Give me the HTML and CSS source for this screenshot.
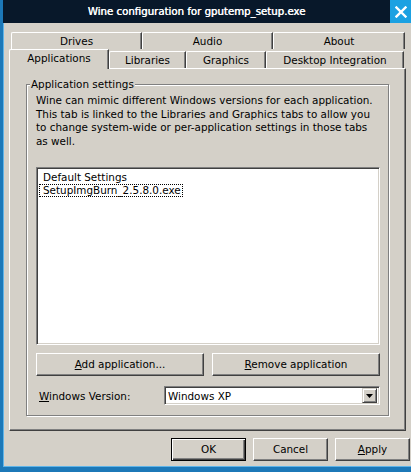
FILE: index.html
```html
<!DOCTYPE html>
<html>
<head>
<meta charset="utf-8">
<link rel="stylesheet" href="styles.css">
</head>
<body>
<div class="window">
  <div class="titlebar">
    <div class="title">Wine configuration for gputemp_setup.exe</div>
    <div class="close">
      <svg width="12" height="12" viewBox="0 0 12 12"><path d="M1.5 1.5 L10.5 10.5 M10.5 1.5 L1.5 10.5" stroke="#fff" stroke-width="2.4" stroke-linecap="square"/></svg>
    </div>
  </div>
  <div class="client">
    <div class="tabs">
      <div class="tabrow back">
        <div class="tab w-drives">Drives</div>
        <div class="tab w-audio">Audio</div>
        <div class="tab w-about">About</div>
      </div>
      <div class="tabrow front">
        <div class="tab sel w-apps">Applications</div>
        <div class="tab w-libs">Libraries</div>
        <div class="tab w-gfx">Graphics</div>
        <div class="tab w-desk">Desktop Integration</div>
      </div>
    </div>
    <div class="pane">
      <div class="group">
        <div class="legend">Application settings</div>
        <p class="desc">Wine can mimic different Windows versions for each application. This tab is linked to the Libraries and Graphics tabs to allow you to change system-wide or per-application settings in those tabs as well.</p>
        <div class="listbox">
          <div class="item">Default Settings</div>
          <div class="item focus">SetupImgBurn_2.5.8.0.exe</div>
        </div>
        <div class="btnrow">
          <div class="btn wide"><u>A</u>dd application...</div>
          <div class="btn wide"><u>R</u>emove application</div>
        </div>
        <div class="verrow">
          <div class="verlabel"><u>W</u>indows Version:</div>
          <div class="combo">
            <div class="combotext">Windows XP</div>
            <div class="dropbtn"><svg width="7" height="4" viewBox="0 0 7 4"><path d="M0 0 H7 L3.5 4 Z" fill="#000"/></svg></div>
          </div>
        </div>
      </div>
    </div>
    <div class="footer">
      <div class="btn small default">OK</div>
      <div class="btn small">Cancel</div>
      <div class="btn small"><u>A</u>pply</div>
    </div>
  </div>
</div>
</body>
</html>
```

FILE: styles.css
```css
html, body {
  margin: 0;
  padding: 0;
  background: #d4d0c8;
  overflow: hidden;
}
body {
  font-family: "DejaVu Sans", sans-serif;
  font-size: 10.4px;
  color: #000;
}
.window {
  width: 411px;
  height: 472px;
  box-sizing: border-box;
  border-left: 3px solid #1c78b8;
  border-bottom: 5px solid #1c78b8;
  box-shadow: inset 1px 0 0 #5fb4e8, inset 0 -1px 0 #5fb4e8;
  display: flex;
  flex-direction: column;
  background: #d4d0c8;
}
.titlebar {
  height: 23px;
  background: #08182a;
  display: flex;
  align-items: center;
  position: relative;
}
.title {
  flex: 1;
  text-align: center;
  color: #fff;
  font-size: 10.2px;
  font-weight: normal;
  text-shadow: 0.4px 0 0 #fff;
  padding-left: 0;
}
.close {
  width: 21px;
  height: 23px;
  background: #1ba1e2;
  display: flex;
  align-items: center;
  justify-content: center;
}
.client {
  flex: 1;
  display: flex;
  flex-direction: column;
  padding: 9px 0 0 6px;
}
.tabs {
  display: flex;
  flex-direction: column;
}
.tabrow {
  display: flex;
}
.tabrow.back {
  margin-left: 2px;
  height: 17px;
}
.tabrow.front {
  height: 19px;
}
.tab {
  box-sizing: border-box;
  border-top: 1px solid #fff;
  border-left: 1px solid #fff;
  border-right: 1px solid #404040;
  box-shadow: inset -1px 0 0 #808080;
  border-top-left-radius: 2px;
  text-align: center;
  line-height: 16px;
  height: 17px;
}
.tabrow.front .tab {
  margin-top: 2px;
  height: 17px;
}
.tabrow.front .tab.sel {
  margin-top: 0;
  height: 20px;
  line-height: 17px;
  position: relative;
  z-index: 2;
  background: #d4d0c8;
}
.w-drives { width: 131px; }
.w-audio { width: 131px; }
.w-about { width: 132px; }
.w-apps { width: 100px; }
.w-libs { width: 77px; }
.w-gfx { width: 80px; }
.w-desk { width: 138px; }
.pane {
  width: 397px;
  height: 363px;
  box-sizing: border-box;
  border-top: 1px solid #fff;
  border-left: 1px solid #fff;
  border-right: 1px solid #404040;
  border-bottom: 1px solid #404040;
  box-shadow: inset -1px -1px 0 #808080;
  padding: 15px 16px 14px 16px;
  display: flex;
}
.group {
  flex: 1;
  position: relative;
  border: 1px solid #808080;
  box-shadow: 1px 1px 0 #fff, inset 1px 1px 0 #fff;
  padding: 0 8px 0 9px;
  display: flex;
  flex-direction: column;
}
.legend {
  position: absolute;
  top: -7px;
  left: 3px;
  padding: 0 1px;
  background: #d4d0c8;
  line-height: 13px;
}
.desc {
  margin: 9px 0 0 0;
  line-height: 13.6px;
  padding-right: 2px;
}
.listbox {
  margin-top: 19px;
  height: 178px;
  box-sizing: border-box;
  background: #fff;
  border-top: 1px solid #808080;
  border-left: 1px solid #808080;
  border-right: 1px solid #fff;
  border-bottom: 1px solid #fff;
  box-shadow: inset 1px 1px 0 #404040, inset -1px -1px 0 #d4d0c8;
  padding: 3px 2px;
}
.item {
  line-height: 13px;
  padding-left: 4px;
}
.listbox .item { display: block; }
.item.focus {
  outline: 1px dotted #000;
  outline-offset: -1px;
  width: max-content;
  padding: 0 2px 0 4px;
}
.btnrow {
  display: flex;
  justify-content: space-between;
  margin-top: 8px;
}
.btn {
  box-sizing: border-box;
  border-top: 1px solid #fff;
  border-left: 1px solid #fff;
  border-right: 1px solid #404040;
  border-bottom: 1px solid #404040;
  box-shadow: inset -1px -1px 0 #808080;
  text-align: center;
  height: 23px;
  line-height: 21px;
}
.btn.wide { width: 168px; }
.verrow {
  display: flex;
  align-items: center;
  margin-top: 10px;
}
.verlabel {
  width: 125px;
  padding-left: 3px;
}
.combo {
  flex: 1;
  height: 19px;
  box-sizing: border-box;
  background: #fff;
  border-top: 1px solid #808080;
  border-left: 1px solid #808080;
  border-right: 1px solid #fff;
  border-bottom: 1px solid #fff;
  box-shadow: inset 1px 1px 0 #404040, inset -1px -1px 0 #d4d0c8;
  display: flex;
  align-items: center;
  padding: 2px 2px 2px 3px;
}
.combotext { flex: 1; }
.dropbtn {
  width: 15px;
  height: 15px;
  box-sizing: border-box;
  background: #d4d0c8;
  border-top: 1px solid #d4d0c8;
  border-left: 1px solid #d4d0c8;
  border-right: 1px solid #404040;
  border-bottom: 1px solid #404040;
  box-shadow: inset 1px 1px 0 #fff, inset -1px -1px 0 #808080;
  display: flex;
  align-items: center;
  justify-content: center;
}
.footer {
  display: flex;
  justify-content: flex-end;
  gap: 7px;
  padding: 7px 1px 0 0;
}
.btn.small { width: 75px; }
.btn.default {
  border: 1px solid #000;
  box-shadow: inset 1px 1px 0 #fff, inset -1px -1px 0 #404040, inset -2px -2px 0 #808080;
}
u { text-decoration: underline; text-underline-offset: 1px; }
```
